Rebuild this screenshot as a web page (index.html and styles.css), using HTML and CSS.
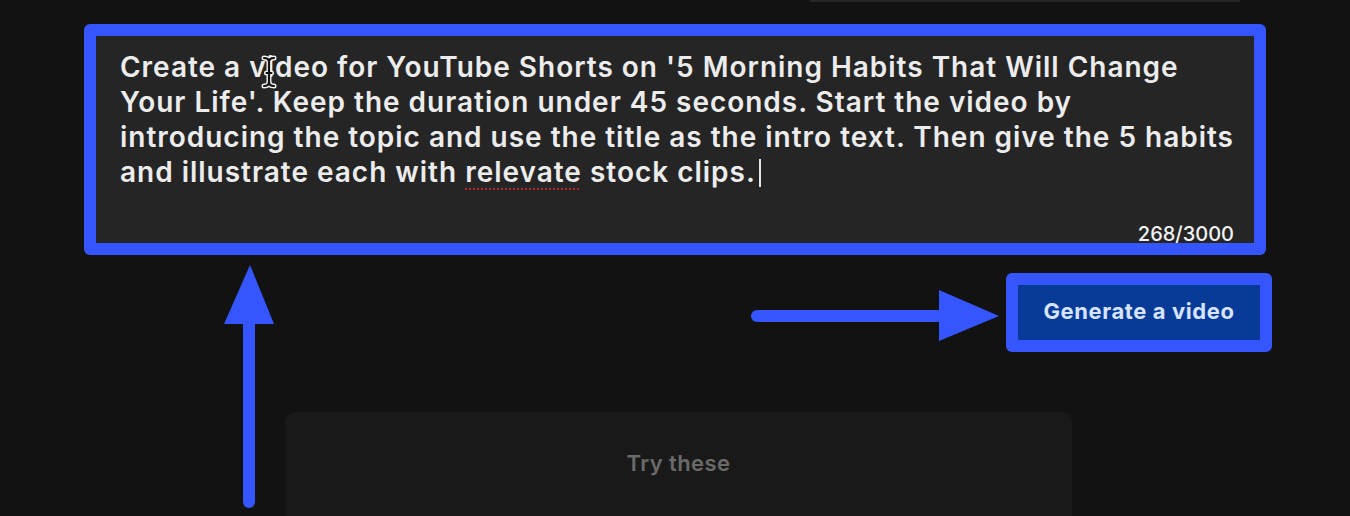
FILE: index.html
```html
<!DOCTYPE html>
<html lang="en">
<head>
<meta charset="utf-8">
<title>Generate a video</title>
<link rel="stylesheet" href="styles.css">
</head>
<body>
<div class="page">
  <div class="top-strip"><div class="top-line"></div></div>

  <div class="prompt-frame">
    <div class="prompt">
      <p class="prompt-text">Create a video for YouTube Shorts on '5 Morning Habits That Will Change<br>Your Life'. Keep the duration under 45 seconds. Start the video by<br>introducing the topic and use the title as the intro text. Then give the 5 habits<br>and illustrate each with <span class="misspelled">relevate</span> stock clips. <span class="caret"></span></p>
      <div class="counter">268/3000</div>
    </div>
  </div>

  <div class="actions">
    <div class="btn-frame">
      <button class="btn-generate">Generate a video</button>
    </div>
  </div>

  <div class="try-card">
    <div class="try-title">Try these</div>
  </div>

  <svg class="ibeam" width="16" height="34" viewBox="0 0 16 34">
    <g fill="none" stroke-linecap="round" stroke-linejoin="round">
      <path d="M3 3 Q8 3 8 7 Q8 3 13 3 M8 7 V27 M3 31 Q8 31 8 27 Q8 31 13 31 M5.5 18 H10.5" stroke="#f4f4f4" stroke-width="5"/>
      <path d="M3 3 Q8 3 8 7 Q8 3 13 3 M8 7 V27 M3 31 Q8 31 8 27 Q8 31 13 31 M5.5 18 H10.5" stroke="#111" stroke-width="2.2"/>
    </g>
  </svg>

  <svg class="arrow-right" width="252" height="54" viewBox="0 0 252 54">
    <line x1="6" y1="26" x2="192" y2="26" stroke="#3556ff" stroke-width="12" stroke-linecap="round"/>
    <polygon points="188,0 248,26 188,51" fill="#3556ff"/>
  </svg>

  <svg class="arrow-up" width="52" height="246" viewBox="0 0 52 246">
    <polygon points="26,0 50,59 0,59" fill="#3556ff"/>
    <line x1="25" y1="55" x2="25" y2="237" stroke="#3556ff" stroke-width="12" stroke-linecap="round"/>
  </svg>
</div>
</body>
</html>
```

FILE: styles.css
```css
* { box-sizing: border-box; }

html, body {
  margin: 0;
  padding: 0;
  background: #121212;
  overflow: hidden;
}

body {
  font-family: Inter, "Noto Sans", "Liberation Sans", sans-serif;
  color: #ececec;
}

.page {
  position: relative;
  width: 1350px;
  height: 516px;
  display: flex;
  flex-direction: column;
}

.top-strip {
  height: 24px;
  display: flex;
  justify-content: flex-start;
  padding-left: 810px;
}

.top-line {
  width: 430px;
  height: 2px;
  background: #262626;
}

.prompt-frame {
  margin-left: 84px;
  width: 1182px;
  height: 231px;
  background: #3556ff;
  border-radius: 6px;
  padding: 12px;
}

.prompt {
  height: 207px;
  background: #252525;
  display: flex;
  flex-direction: column;
  justify-content: space-between;
  padding: 14px 20px 0 24px;
}

.prompt-text {
  margin: 0;
  font-size: 28px;
  line-height: 35px;
  font-weight: 600;
  color: #ececec;
  letter-spacing: 0.98px;
  white-space: nowrap;
}

.misspelled {
  text-decoration: underline dotted #b3262e;
  text-decoration-thickness: 2px;
  text-underline-offset: 6px;
}

.caret {
  display: inline-block;
  width: 2px;
  height: 28px;
  background: #e6e6e6;
  vertical-align: -5px;
  margin-left: -4px;
}

.counter {
  align-self: flex-end;
  font-size: 20px;
  line-height: 18px;
  font-weight: 500;
  color: #f2f2f2;
}

.actions {
  display: flex;
  justify-content: flex-end;
  padding-right: 78px;
  margin-top: 18px;
}

.btn-frame {
  width: 266px;
  height: 79px;
  background: #3556ff;
  border-radius: 6px;
  padding: 12px;
}

.btn-generate {
  width: 100%;
  height: 100%;
  border: none;
  background: #083b98;
  color: #d6e4ff;
  font-family: Inter, "Noto Sans", sans-serif;
  font-size: 22px;
  font-weight: 700;
  letter-spacing: 0.6px;
  padding: 0 0 4px 0;
}

.try-card {
  margin-top: 60px;
  margin-left: 285px;
  width: 787px;
  flex: 1;
  background: #191919;
  border-radius: 10px 10px 0 0;
  padding-top: 38px;
  display: flex;
  justify-content: center;
  align-items: flex-start;
}

.try-title {
  font-size: 22px;
  line-height: 26px;
  font-weight: 600;
  letter-spacing: 0.4px;
  color: #6a6a6a;
}

.ibeam {
  position: absolute;
  left: 261px;
  top: 55px;
}

.arrow-right {
  position: absolute;
  left: 751px;
  top: 290px;
}

.arrow-up {
  position: absolute;
  left: 224px;
  top: 265px;
}
```
